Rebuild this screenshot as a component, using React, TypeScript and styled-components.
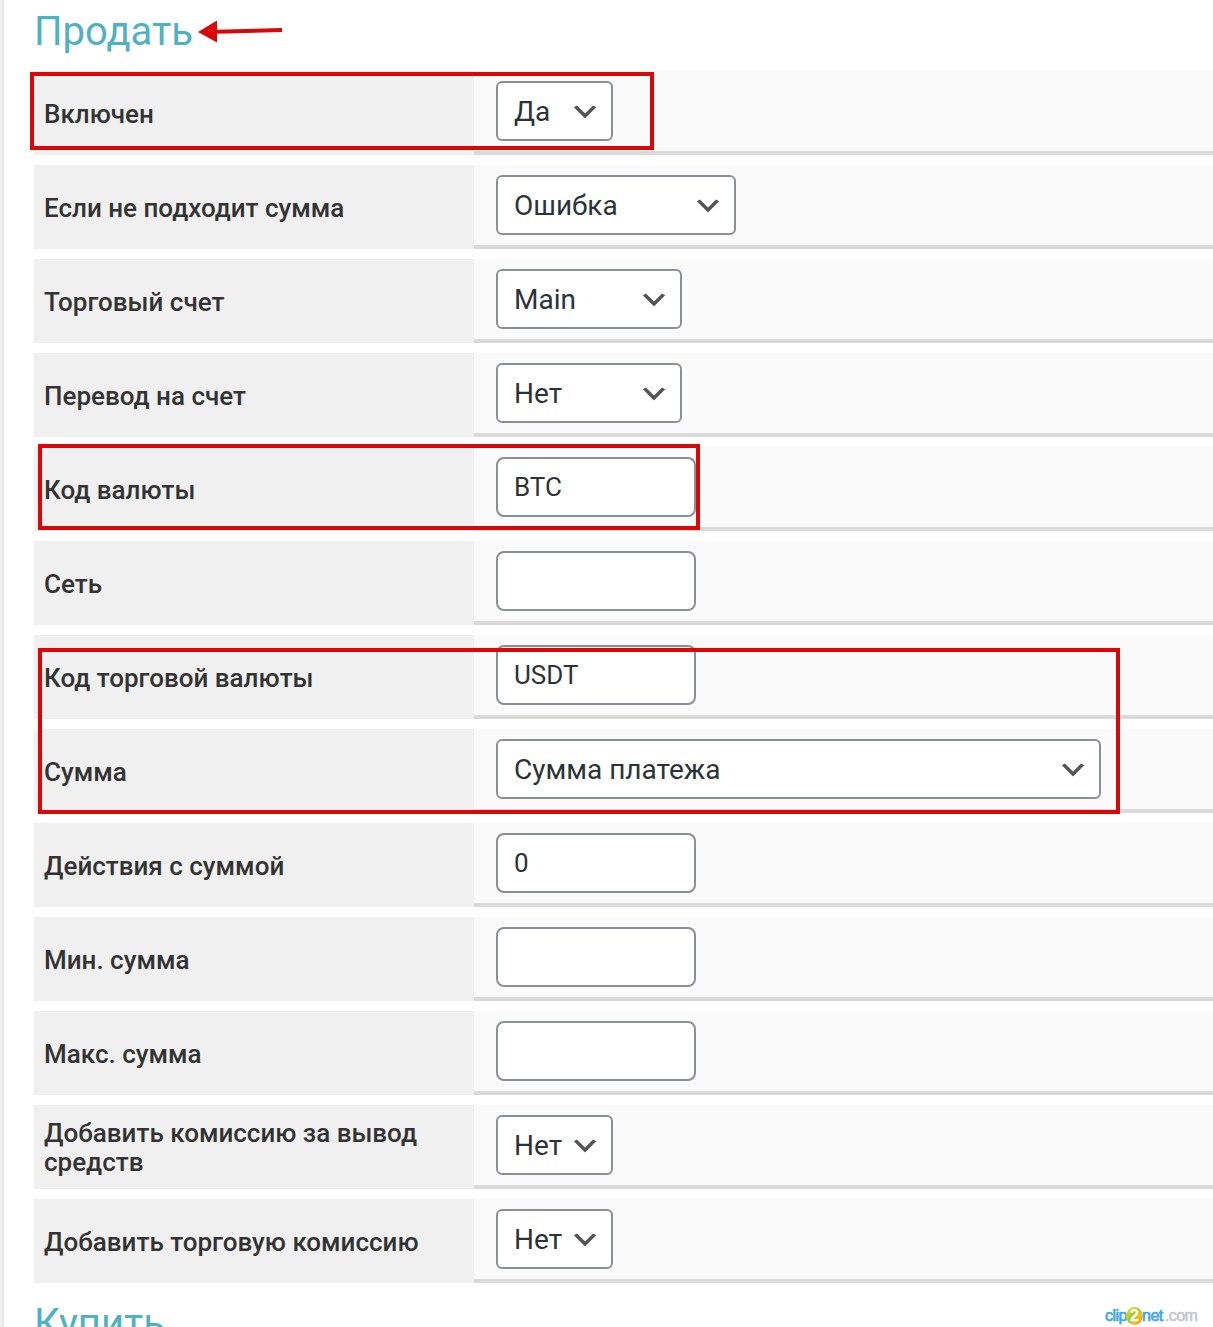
import React from 'react';
import styled, { createGlobalStyle } from 'styled-components';

const GlobalStyle = createGlobalStyle`
  *, *::before, *::after { box-sizing: border-box; }
  html, body { margin: 0; background: #fff; }
  body { font-family: Roboto, "Open Sans", sans-serif; overflow: hidden; }
`;

const Page = styled.div`
  position: relative;
  display: flex;
  width: 1213px;
  height: 1327px;
  overflow: hidden;
  background: #fff;
`;

const Rail = styled.div`
  flex: none;
  width: 4px;
  background: #f0f0f1;
  border-right: 2px solid #e5e5e5;
`;

const Settings = styled.main`
  flex: 1;
  min-width: 0;
  padding-left: 30px;
`;

const Heading = styled.h2`
  margin: 0;
  height: 61px;
  font-size: 40px;
  font-weight: 400;
  line-height: 64px;
  color: #50b2c0;
  white-space: nowrap;
`;

const Rows = styled.div`
  display: flex;
  flex-direction: column;
  gap: 10px;
  padding-top: 10px;
  margin-bottom: 9px;
`;

const Row = styled.div`
  display: grid;
  grid-template-columns: 440px 1fr;
  height: 84px;
`;

const Label = styled.div`
  display: flex;
  align-items: center;
  padding: 2px 10px 0;
  background: #f0f0f0;
  color: #333;
  font-size: 26px;
  font-weight: 500;
  line-height: 29px;
`;

const Field = styled.div`
  padding: 10px 22px 0;
  background: #fafafa;
  border-bottom: 4px solid #dadada;
`;

const SelectBox = styled.div<{ $width: number }>`
  display: flex;
  align-items: center;
  justify-content: space-between;
  width: ${(p) => p.$width}px;
  height: 60px;
  padding: 0 10px 0 16px;
  border: 2px solid #8c8f94;
  border-radius: 6px;
  background: #fff;
  color: #2c3338;
  font-size: 28px;
  line-height: 56px;
  white-space: nowrap;
`;

const SelectValue = styled.span`
  padding-top: 2px;
`;

const Chevron = styled.svg`
  flex: none;
  width: 32px;
  height: 32px;
  margin: 2px 0 0 -10px;
  fill: #555;
`;

const TextInput = styled.input`
  display: block;
  width: 200px;
  height: 60px;
  padding: 0 16px;
  border: 2px solid #8c8f94;
  border-radius: 8px;
  background: #fff;
  color: #2c3338;
  font-family: inherit;
  font-size: 26px;
  outline: none;
`;

const Highlight = styled.div<{ $x: number; $y: number; $w: number; $h: number }>`
  position: absolute;
  left: ${(p) => p.$x}px;
  top: ${(p) => p.$y}px;
  width: ${(p) => p.$w}px;
  height: ${(p) => p.$h}px;
  border: 4px solid #d90707;
`;

const Arrow = styled.svg`
  position: absolute;
  left: 196px;
  top: 18px;
`;

const Watermark = styled.div`
  position: absolute;
  left: 1105px;
  top: 1305px;
  display: flex;
  align-items: center;
  height: 22px;
  font-family: "Liberation Sans", Arial, sans-serif;
  font-size: 16px;
  line-height: 22px;
  letter-spacing: -0.5px;
  color: #45a7e6;
  -webkit-text-stroke: 0.7px #45a7e6;
`;

const Badge = styled.span`
  display: flex;
  align-items: center;
  justify-content: center;
  width: 17px;
  height: 18px;
  margin: 0 -1px;
  border-radius: 50%;
  background: linear-gradient(125deg, #fbd31c 10%, #8fcb2b 45%, #f6c21a 65%, #f58a1f 95%);
  color: #fff;
  font-size: 16px;
  font-weight: 700;
  letter-spacing: 0;
  -webkit-text-stroke: 0.3px #fff;
`;

const Domain = styled.span`
  margin-left: 2px;
  color: #c3c5cc;
  -webkit-text-stroke: 0.5px #c3c5cc;
`;

type Option = { label: string; value: string; select?: number };

const options: Option[] = [
  { label: 'Включен', value: 'Да', select: 117 },
  { label: 'Если не подходит сумма', value: 'Ошибка', select: 240 },
  { label: 'Торговый счет', value: 'Main', select: 186 },
  { label: 'Перевод на счет', value: 'Нет', select: 186 },
  { label: 'Код валюты', value: 'BTC' },
  { label: 'Сеть', value: '' },
  { label: 'Код торговой валюты', value: 'USDT' },
  { label: 'Сумма', value: 'Сумма платежа', select: 605 },
  { label: 'Действия с суммой', value: '0' },
  { label: 'Мин. сумма', value: '' },
  { label: 'Макс. сумма', value: '' },
  { label: 'Добавить комиссию за вывод средств', value: 'Нет', select: 117 },
  { label: 'Добавить торговую комиссию', value: 'Нет', select: 117 },
];

function Select({ value, width }: { value: string; width: number }) {
  return (
    <SelectBox $width={width}>
      <SelectValue>{value}</SelectValue>
      <Chevron viewBox="0 0 20 20">
        <path d="M5 6l5 5 5-5 2 1-7 7-7-7 2-1z" />
      </Chevron>
    </SelectBox>
  );
}

export default function App() {
  return (
    <>
      <GlobalStyle />
      <Page>
        <Rail />
        <Settings>
          <Heading>Продать</Heading>
          <Rows>
            {options.map((o) => (
              <Row key={o.label}>
                <Label>{o.label}</Label>
                <Field>
                  {o.select ? (
                    <Select value={o.value} width={o.select} />
                  ) : (
                    <TextInput defaultValue={o.value} />
                  )}
                </Field>
              </Row>
            ))}
          </Rows>
          <Heading>Купить</Heading>
        </Settings>
        <Arrow width="90" height="28" viewBox="0 0 90 28">
          <path d="M20 13.8L86 12" stroke="#d90707" strokeWidth="4" fill="none" />
          <path d="M2 14L21 2.5V24.5z" fill="#d90707" />
        </Arrow>
        <Highlight $x={30} $y={72} $w={624} $h={78} />
        <Highlight $x={38} $y={444} $w={662} $h={86} />
        <Highlight $x={38} $y={648} $w={1082} $h={166} />
        <Watermark>
          <span>clip</span>
          <Badge>2</Badge>
          <span>net</span>
          <Domain>.com</Domain>
        </Watermark>
      </Page>
    </>
  );
}
